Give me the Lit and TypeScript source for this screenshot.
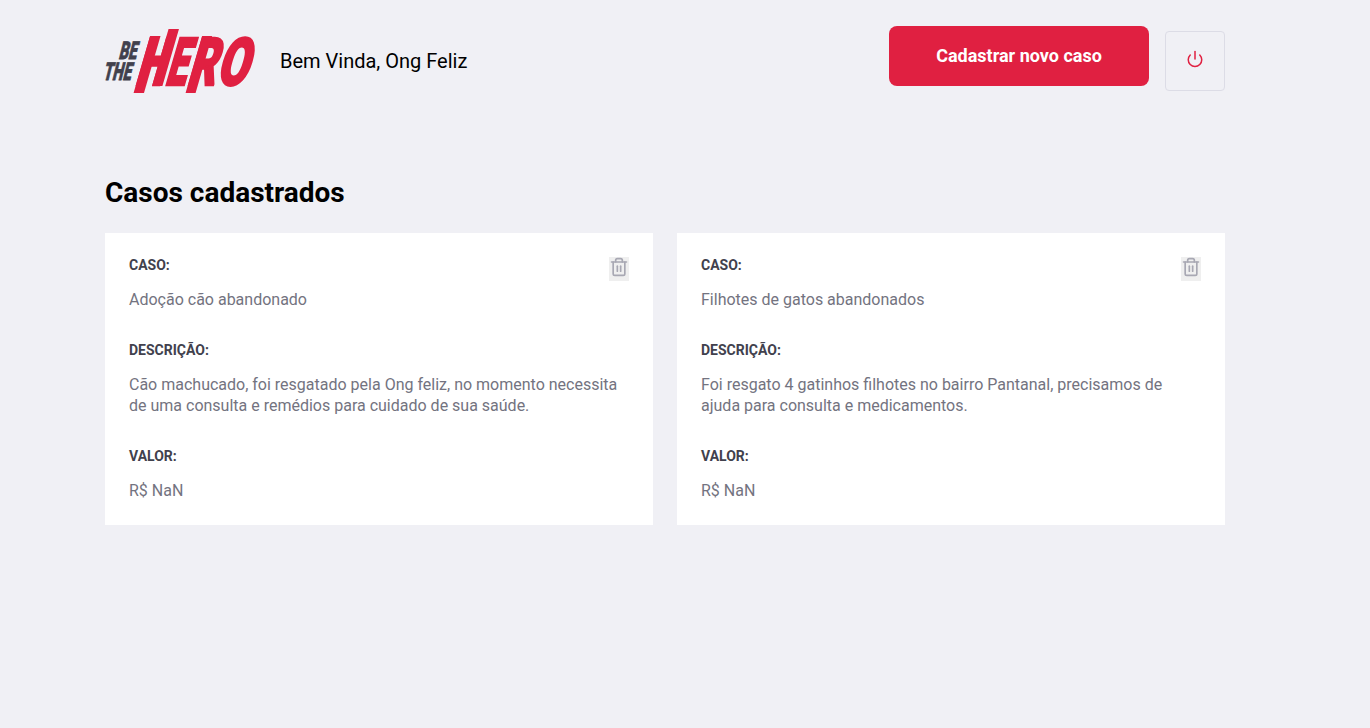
import { LitElement, html, css, svg } from "lit";
import { customElement, property } from "lit/decorators.js";

interface Incident {
  title: string;
  description: string;
  value: string;
}

@customElement("hero-logo")
class HeroLogo extends LitElement {
  static styles = css`
    :host { display: block; width: 152px; height: 66px; }
    svg { display: block; overflow: visible; }
    text { font-family: Roboto, sans-serif; font-weight: 900; }
    .hero { fill: #e02041; stroke: #e02041; stroke-width: 2.6px; font-size: 66px; }
    .small { fill: #41414d; stroke: #41414d; stroke-width: 0.8px; font-size: 24.5px; }
    .stem { fill: #e02041; }
  `;

  private letter(char: string, x: number, scale: number) {
    return svg`<text class="hero" transform="translate(${x} -1.3) scale(${scale} 1)">${char}</text>`;
  }

  render() {
    return html`
      <svg width="152" height="66" viewBox="0 0 152 66" role="img" aria-label="Be The Hero">
        <g transform="translate(0 58) skewX(-16.2)">
          ${this.letter("H", 29, 0.59)}
          ${this.letter("E", 58.8, 0.56)}
          ${this.letter("R", 81, 0.65)}
          ${this.letter("O", 110, 0.68)}
          <rect class="stem" x="30.6" y="-50" width="10.4" height="57"></rect>
          <rect class="stem" x="47" y="-57" width="10.4" height="57"></rect>
          <rect class="stem" x="82.6" y="-50" width="10" height="57"></rect>
        </g>
        <g transform="translate(0 31) skewX(-14)">
          <text class="small" transform="scale(0.6 1)" x="22">BE</text>
        </g>
        <g transform="translate(-2.4 52) skewX(-14)">
          <text class="small" transform="scale(0.6 1)" x="0">THE</text>
        </g>
      </svg>
    `;
  }
}

@customElement("incident-card")
class IncidentCard extends LitElement {
  @property({ attribute: false }) incident!: Incident;

  static styles = css`
    :host { display: flex; align-items: flex-start; background: #fff; padding: 24px; }
    .details { flex: 1; min-width: 0; display: grid; gap: 32px; margin-right: -20px; }
    .field { display: grid; gap: 16px; }
    .label { font-size: 14px; line-height: 16px; font-weight: 700; color: #41414d; }
    .value { margin: 0; font-size: 16px; line-height: 21px; color: #737380; }
    .remove {
      position: relative; display: block; flex: none; width: 20px; height: 24px;
      padding: 0; border: 0; background: #efefef; color: #a8a8b3;
    }
    .remove svg { display: block; margin-bottom: 4px; }
  `;

  private field(label: string, value: string) {
    return html`<div class="field">
      <strong class="label">${label}</strong>
      <p class="value">${value}</p>
    </div>`;
  }

  render() {
    const { title, description, value } = this.incident;
    return html`
      <div class="details">
        ${this.field("CASO:", title)}
        ${this.field("DESCRIÇÃO:", description)}
        ${this.field("VALOR:", value)}
      </div>
      <button class="remove" aria-label="Excluir">
        <svg width="20" height="20" viewBox="0 0 24 24" fill="none" stroke="currentColor" stroke-width="2" stroke-linecap="round" stroke-linejoin="round">
          <polyline points="3 6 5 6 21 6"></polyline>
          <path d="M19 6v14a2 2 0 0 1-2 2H7a2 2 0 0 1-2-2V6m3 0V4a2 2 0 0 1 2-2h4a2 2 0 0 1 2 2v2"></path>
          <line x1="10" y1="11" x2="10" y2="17"></line>
          <line x1="14" y1="11" x2="14" y2="17"></line>
        </svg>
      </button>
    `;
  }
}

@customElement("app-root")
class AppRoot extends LitElement {
  private incidents: Incident[] = [
    {
      title: "Adoção cão abandonado",
      description: "Cão machucado, foi resgatado pela Ong feliz, no momento necessita de uma consulta e remédios para cuidado de sua saúde.",
      value: "R$ NaN",
    },
    {
      title: "Filhotes de gatos abandonados",
      description: "Foi resgato 4 gatinhos filhotes no bairro Pantanal, precisamos de ajuda para consulta e medicamentos.",
      value: "R$ NaN",
    },
  ];

  static styles = css`
    :host {
      display: block; box-sizing: border-box; min-height: 100vh; padding: 26px 105px 32px;
      background: #f0f0f5; font-family: Roboto, Arial, sans-serif;
    }
    .container { width: 1120px; }
    .header { display: flex; align-items: flex-start; height: 70px; }
    .logo { margin-top: 2px; }
    .welcome { margin-left: 23px; margin-top: 23px; font-size: 20px; line-height: 24px; color: #000; }
    .create {
      box-sizing: border-box; width: 260px; height: 60px; margin-left: auto; border-radius: 8px;
      background: #e02041; color: #fff; font-size: 18px; line-height: 60px; font-weight: 700;
      text-align: center; text-decoration: none;
    }
    .logout {
      display: flex; justify-content: center; align-items: flex-start; box-sizing: border-box;
      width: 60px; height: 60px; margin: 5px 0 0 16px; padding: 18px 0 0;
      border: 1px solid #dcdce6; border-radius: 4px; background: transparent; color: #e02041;
    }
    .title { margin: 80px 0 24px; font-size: 28px; line-height: 33px; font-weight: 700; color: #000; }
    .list { display: grid; grid-template-columns: repeat(2, 1fr); gap: 24px; }
  `;

  render() {
    return html`
      <div class="container">
        <header class="header">
          <hero-logo class="logo"></hero-logo>
          <span class="welcome">Bem Vinda, Ong Feliz</span>
          <a class="create" href="#">Cadastrar novo caso</a>
          <button class="logout" aria-label="Sair">
            <svg width="18" height="18" viewBox="0 0 24 24" fill="none" stroke="currentColor" stroke-width="2" stroke-linecap="round" stroke-linejoin="round">
              <path d="M18.36 6.64a9 9 0 1 1-12.73 0"></path>
              <line x1="12" y1="2" x2="12" y2="12"></line>
            </svg>
          </button>
        </header>
        <h1 class="title">Casos cadastrados</h1>
        <div class="list">
          ${this.incidents.map((incident) => html`<incident-card .incident=${incident}></incident-card>`)}
        </div>
      </div>
    `;
  }
}
